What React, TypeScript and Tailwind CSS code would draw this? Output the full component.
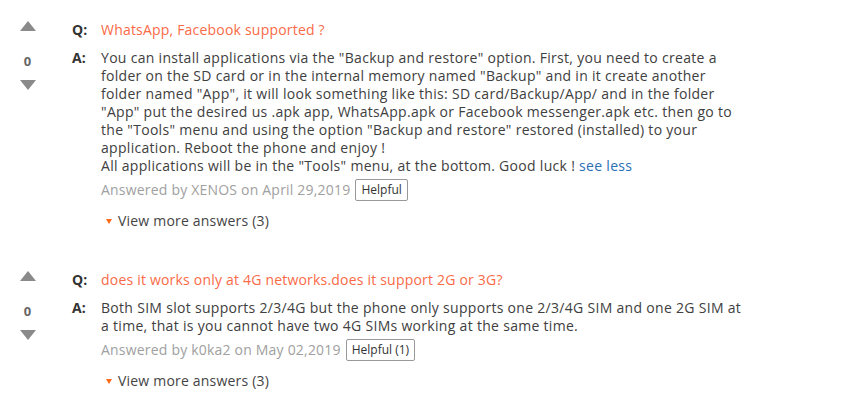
import React from 'react'

interface QA {
  question: string
  answer: React.ReactNode
  author: string
  date: string
  helpful: string
  votes: number
  textWidth: string
}

const items: QA[] = [
  {
    question: 'WhatsApp, Facebook supported ?',
    answer: (
      <>
        You can install applications via the "Backup and restore" option. First, you need to create a folder on the SD card or in the internal memory named "Backup" and in it create another folder named "App", it will look something like this: SD card/Backup/App/ and in the folder "App" put the desired us .apk app, WhatsApp.apk or Facebook messenger.apk etc. then go to the "Tools" menu and using the option "Backup and restore" restored (installed) to your application. Reboot the phone and enjoy !
        <br />
        All applications will be in the "Tools" menu, at the bottom. Good luck !{' '}
        <a href="#" className="text-[#2a6eb5]">see less</a>
      </>
    ),
    author: 'XENOS',
    date: 'April 29,2019',
    helpful: 'Helpful',
    votes: 0,
    textWidth: 'w-[632px]',
  },
  {
    question: 'does it works only at 4G networks.does it support 2G or 3G?',
    answer:
      'Both SIM slot supports 2/3/4G but the phone only supports one 2/3/4G SIM and one 2G SIM at a time, that is you cannot have two 4G SIMs working at the same time.',
    author: 'k0ka2',
    date: 'May 02,2019',
    helpful: 'Helpful (1)',
    votes: 0,
    textWidth: 'w-[648px]',
  },
]

function Triangle({ up }: { up?: boolean }) {
  return (
    <svg width="16" height="10" viewBox="0 0 16 10" className="block">
      {up ? <polygon points="8,0 16,10 0,10" fill="#8a8a8a" /> : <polygon points="0,0 16,0 8,10" fill="#8a8a8a" />}
    </svg>
  )
}

function QuestionItem({ item }: { item: QA }) {
  return (
    <div className="flex">
      {/* Votes */}
      <div className="w-[55px] shrink-0 flex flex-col items-center pt-[1px]">
        <Triangle up />
        <span className="mt-[21px] text-[13px] font-bold text-[#666] leading-[18px]">{item.votes}</span>
        <div className="mt-[10px]">
          <Triangle />
        </div>
      </div>

      {/* Content */}
      <div className="pl-[17px] text-[14px] leading-[18px] tracking-[0.2px]">
        <div className="flex pt-[1px]">
          <span className="w-[29px] shrink-0 font-bold text-[#333]">Q:</span>
          <span className="text-[#fa6a47]">{item.question}</span>
        </div>
        <div className="flex mt-[10px]">
          <span className="w-[29px] shrink-0 font-bold text-[#333]">A:</span>
          <div className={item.textWidth}>
            <p className="text-[#404040] tracking-[0.3px]">{item.answer}</p>
            <div className="flex items-center mt-[4px] h-[22px]">
              <span className="text-[#a0a0a0]">
                Answered by {item.author} on {item.date}
              </span>
              <button className="ml-[5px] h-[22px] px-[5px] border border-[#999] rounded-[2px] text-[12px] tracking-normal text-[#333] bg-white leading-none">
                {item.helpful}
              </button>
            </div>
            <div className="flex items-center mt-[11px] pl-[5px] text-[#444]">
              <svg width="6" height="5" viewBox="0 0 6 5" className="mr-[6px]">
                <polygon points="0,0 6,0 3,5" fill="#ff6a1a" />
              </svg>
              View more answers (3)
            </div>
          </div>
        </div>
      </div>
    </div>
  )
}

export default function App() {
  return (
    <div className="w-[854px] h-[406px] bg-white pt-[20px] font-['Open_Sans',sans-serif] overflow-hidden">
      <div className="flex flex-col gap-[40px]">
        {items.map((item, i) => (
          <QuestionItem key={i} item={item} />
        ))}
      </div>
    </div>
  )
}
